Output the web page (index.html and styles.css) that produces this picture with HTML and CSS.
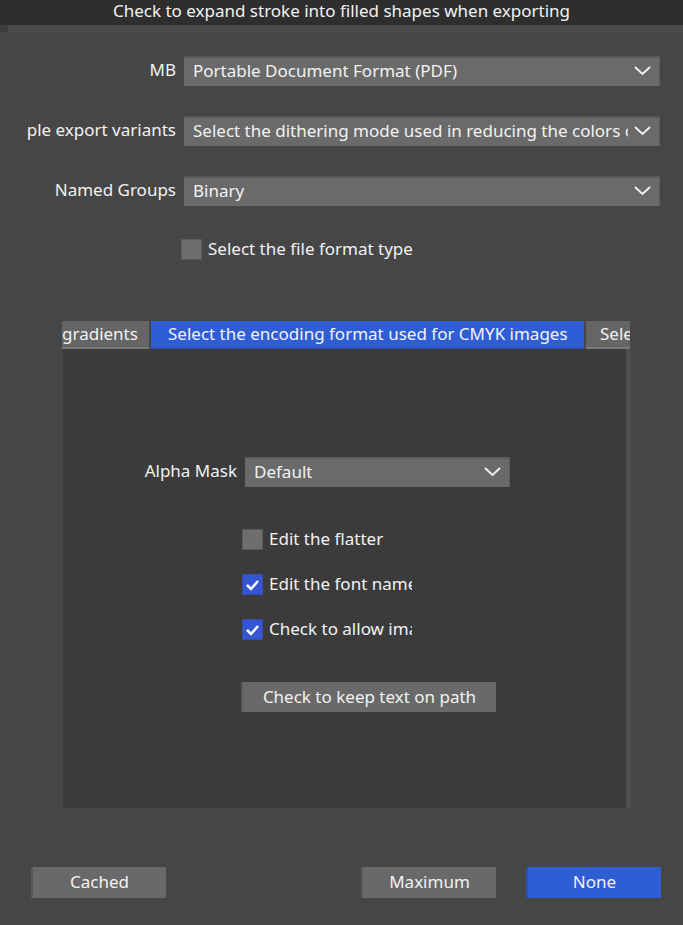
FILE: index.html
```html
<!DOCTYPE html>
<html lang="en">
<head>
    <meta charset="UTF-8">
    <meta name="viewport" content="width=device-width, initial-scale=1.0">
    <title>Export Options</title>
    <link rel="stylesheet" href="styles.css">
</head>
<body>
    <div class="titlebar">Check to expand stroke into filled shapes when exporting</div>
    <div class="strip"></div>

    <div class="content">
        <!-- Top form rows -->
        <div class="row">
            <div class="row-label">MB</div>
            <div class="dropdown wide">
                <span class="dropdown-text">Portable Document Format (PDF)</span>
                <svg class="chevron" width="17" height="10" viewBox="0 0 17 10"><polyline points="1,1 8.5,8 16,1" /></svg>
            </div>
        </div>
        <div class="row">
            <div class="row-label">ple export variants</div>
            <div class="dropdown wide">
                <span class="dropdown-text">Select the dithering mode used in reducing the colors of images</span>
                <svg class="chevron" width="17" height="10" viewBox="0 0 17 10"><polyline points="1,1 8.5,8 16,1" /></svg>
            </div>
        </div>
        <div class="row">
            <div class="row-label">Named Groups</div>
            <div class="dropdown wide">
                <span class="dropdown-text">Binary</span>
                <svg class="chevron" width="17" height="10" viewBox="0 0 17 10"><polyline points="1,1 8.5,8 16,1" /></svg>
            </div>
        </div>
        <label class="check top-check">
            <span class="box"></span>
            <span class="check-text">Select the file format type</span>
        </label>

        <!-- Tabs -->
        <div class="tabs">
            <div class="tab first">gradients</div>
            <div class="tab active">Select the encoding format used for CMYK images</div>
            <div class="tab last">Select</div>
        </div>
        <div class="panel">
            <div class="panel-row">
                <div class="panel-label">Alpha Mask</div>
                <div class="dropdown small">
                    <span class="dropdown-text">Default</span>
                    <svg class="chevron" width="17" height="10" viewBox="0 0 17 10"><polyline points="1,1 8.5,8 16,1" /></svg>
                </div>
            </div>
            <div class="panel-checks">
                <label class="check">
                    <span class="box"></span>
                    <span class="check-text">Edit the flatter</span>
                </label>
                <label class="check">
                    <span class="box checked"><svg width="15" height="12" viewBox="0 0 15 12"><polyline points="2,6 6,10 13,2" /></svg></span>
                    <span class="check-text">Edit the font name</span>
                </label>
                <label class="check">
                    <span class="box checked"><svg width="15" height="12" viewBox="0 0 15 12"><polyline points="2,6 6,10 13,2" /></svg></span>
                    <span class="check-text">Check to allow images</span>
                </label>
            </div>
            <button class="btn path-btn">Check to keep text on path</button>
        </div>

        <!-- Footer buttons -->
        <div class="footer">
            <button class="btn">Cached</button>
            <div class="spacer"></div>
            <button class="btn">Maximum</button>
            <button class="btn primary">None</button>
        </div>
    </div>
</body>
</html>
```
FILE: styles.css
```css
body {
    margin: 0;
    background-color: #464646;
    color: #f2f2f2;
    font-family: "Noto Sans", sans-serif;
    font-size: 17px;
    width: 683px;
    height: 925px;
    overflow: hidden;
}
.titlebar {
    height: 25px;
    line-height: 21px;
    background-color: #2e2e2e;
    text-align: center;
}
.strip {
    height: 7px;
    background-color: #4c4c4c;
    border-left: 8px solid #3d3d3d;
}
.content {
    display: flex;
    flex-direction: column;
    padding-top: 24px;
}
.row {
    display: flex;
    align-items: center;
    height: 30px;
    margin-bottom: 30px;
}
.row-label {
    width: 176px;
    margin-right: 8px;
    padding-bottom: 3px;
    display: flex;
    justify-content: flex-end;
    white-space: nowrap;
    overflow: hidden;
}
.dropdown {
    display: flex;
    align-items: center;
    height: 30px;
    box-sizing: border-box;
    background-color: #6a6a6a;
    border-top: 2px solid #5a5a5a;
    border-right: 1px solid #5c5c5c;
    padding: 0 8px 3px 9px;
}
.dropdown.wide {
    width: 476px;
}
.dropdown.small {
    width: 265px;
}
.dropdown-text {
    flex: 1;
    white-space: nowrap;
    overflow: hidden;
    margin-right: 6px;
}
.chevron {
    flex-shrink: 0;
    fill: none;
    stroke: #f0f0f0;
    stroke-width: 2;
}
.check {
    display: flex;
    align-items: center;
    height: 21px;
}
.top-check {
    margin: 3px 0 0 181px;
}
.box {
    width: 21px;
    height: 21px;
    box-sizing: border-box;
    background-color: #6e6e6e;
    border: 1px solid #5a5a5a;
    margin-right: 6px;
    display: flex;
    align-items: center;
    justify-content: center;
    flex-shrink: 0;
}
.box.checked {
    background-color: #3556d2;
    border-color: #3a4bb0;
}
.box svg {
    fill: none;
    stroke: #ffffff;
    stroke-width: 2.5;
}
.check-text {
    white-space: nowrap;
    padding-bottom: 2px;
}
.tabs {
    display: flex;
    margin: 61px 0 0 62px;
    width: 568px;
    height: 28px;
    overflow: hidden;
    gap: 2px;
}
.tab {
    height: 28px;
    line-height: 26px;
    background-color: #656565;
    border-bottom: 2px solid #7a7a7a;
    box-sizing: border-box;
    white-space: nowrap;
    flex-shrink: 0;
}
.tab.first {
    width: 87px;
    text-align: right;
    padding-right: 14px;
}
.tab.active {
    width: 433px;
    background-color: #2f5ed4;
    border-bottom-color: #2a52c0;
    padding-left: 17px;
}
.tab.last {
    padding-left: 14px;
    width: 60px;
}
.panel {
    margin-left: 63px;
    width: 563px;
    height: 459px;
    background-color: #3b3b3b;
    border-right: 5px solid #4f4f4f;
    display: flex;
    flex-direction: column;
}
.panel-row {
    display: flex;
    align-items: center;
    margin-top: 108px;
}
.panel-label {
    width: 174px;
    text-align: right;
    margin-right: 8px;
    padding-bottom: 3px;
}
.panel-checks {
    display: flex;
    flex-direction: column;
    gap: 24px;
    margin: 42px 0 0 179px;
    width: 170px;
    overflow: hidden;
}
.btn {
    font-family: "Noto Sans", sans-serif;
    font-size: 17px;
    color: #f2f2f2;
    background-color: #696969;
    border: none;
    border-left: 2px solid #5a5a5a;
    height: 31px;
    width: 135px;
    padding: 0 0 2px;
}
.path-btn {
    width: 255px;
    height: 30px;
    margin: 42px 0 0 178px;
}
.footer {
    display: flex;
    margin: 59px 22px 0 31px;
    gap: 30px;
}
.spacer {
    flex: 1;
}
.btn.primary {
    background-color: #2f5ed4;
    border-left-color: #2a50b8;
}
```
